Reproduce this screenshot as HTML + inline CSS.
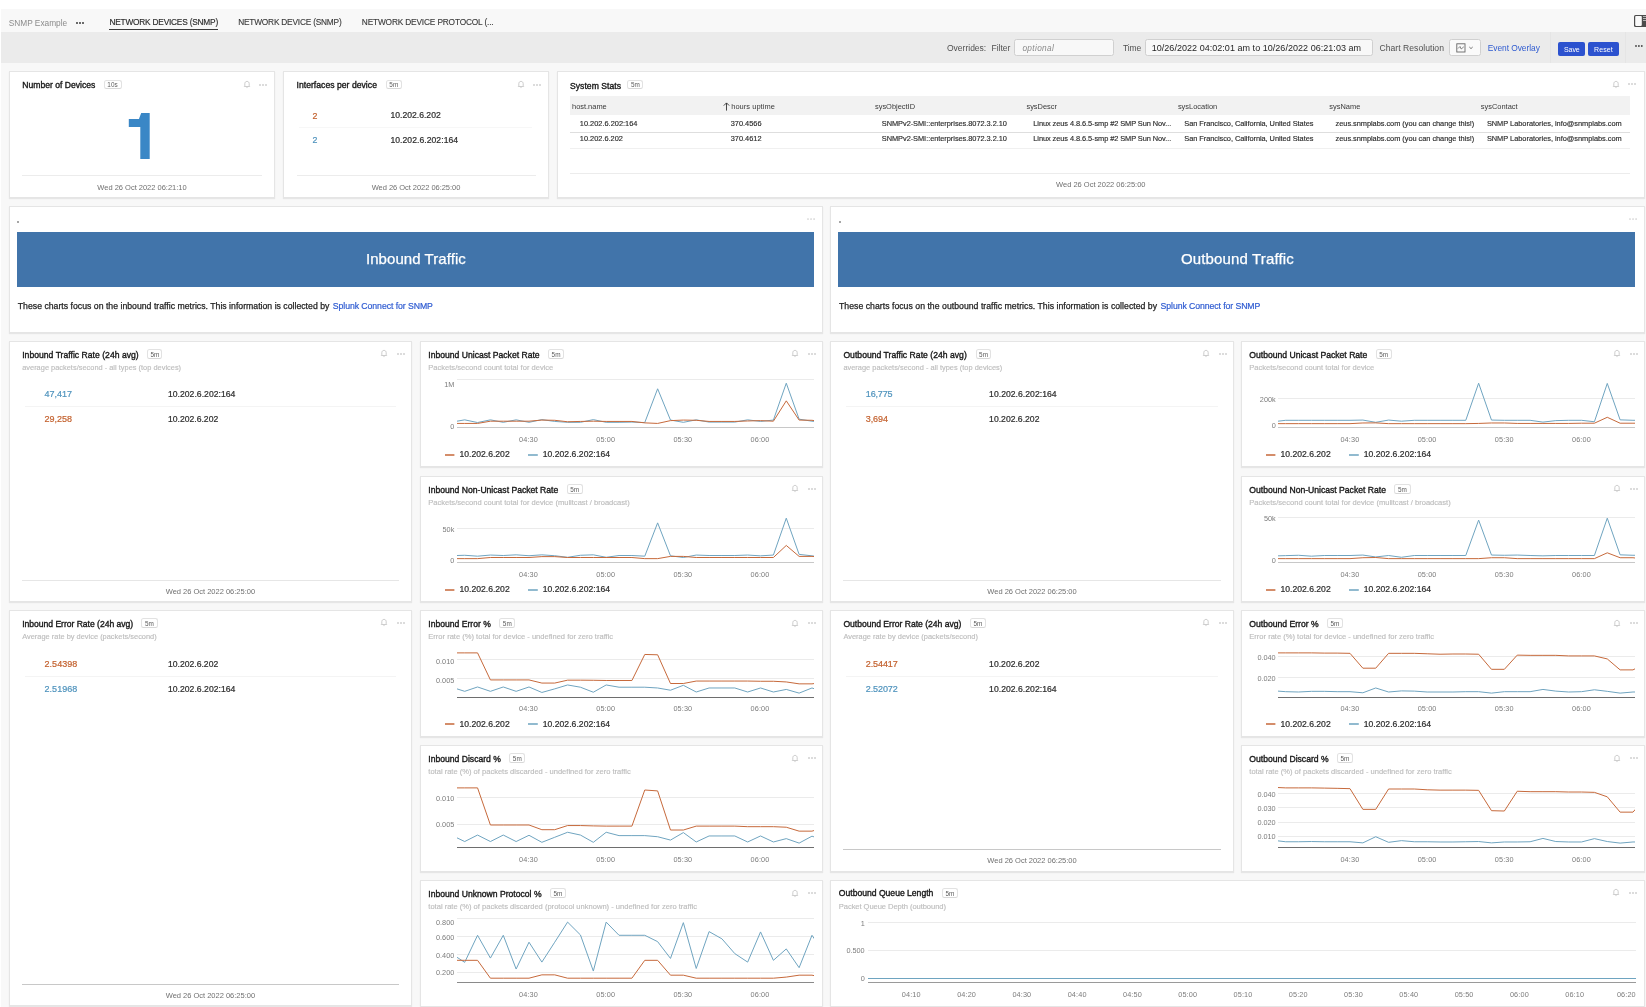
<!DOCTYPE html><html><head><meta charset="utf-8"><title>SNMP Example</title><style>
html,body{margin:0;padding:0;}
body{width:1646px;height:1007px;overflow:hidden;background:#f8f8f8;position:relative;font-family:"Liberation Sans",sans-serif;}
.t{position:absolute;white-space:nowrap;line-height:1;}
#w{position:absolute;left:0;top:0;width:1646px;height:1007px;will-change:transform;}
.r{position:absolute;}
</style></head><body><div id="w"><div class="r" style="left:0;top:0;width:1646px;height:9px;background:#fff"></div>
<div class="r" style="left:0;top:0;width:1px;height:1007px;background:#fff"></div>
<div class="r" style="left:1.00px;top:9.00px;width:1645.00px;height:23.00px;background:#f8f8f8;"></div>
<div class="r" style="left:1.00px;top:32.00px;width:1645.00px;height:30.60px;background:#ebebeb;"></div>
<div class="t" style="left:8.80px;top:19.00px;font-size:8.3px;color:#8b8b8b;letter-spacing:-0.011px;">SNMP Example</div>
<svg class="r" style="left:75.00px;top:20.50px" width="10.00" height="4"><circle cx="2.00" cy="2" r="1.0" fill="#3c3c3c"/><circle cx="5.00" cy="2" r="1.0" fill="#3c3c3c"/><circle cx="8.00" cy="2" r="1.0" fill="#3c3c3c"/></svg>
<div class="t" style="left:109.40px;top:18.00px;font-size:8.3px;color:#2b2b2b;letter-spacing:-0.199px;-webkit-text-stroke:0.15px #2b2b2b;">NETWORK DEVICES (SNMP)</div>
<div class="r" style="left:109.40px;top:28.80px;width:108.60px;height:1.20px;background:#3a3a3a;"></div>
<div class="t" style="left:238.20px;top:18.00px;font-size:8.3px;color:#3a3a3a;letter-spacing:-0.197px;-webkit-text-stroke:0.12px #3a3a3a;">NETWORK DEVICE (SNMP)</div>
<div class="t" style="left:361.80px;top:18.00px;font-size:8.3px;color:#3a3a3a;letter-spacing:-0.155px;-webkit-text-stroke:0.12px #3a3a3a;">NETWORK DEVICE PROTOCOL (...</div>
<svg class="r" style="left:1634px;top:15px" width="12" height="12" viewBox="0 0 12 12"><rect x="0" y="0" width="14" height="12" rx="1.6" fill="#4c4c4c"/><rect x="1.2" y="1.1" width="6.6" height="9.8" rx="0.8" fill="#fafafa"/><rect x="9" y="1.0" width="4" height="0.9" fill="#c0c0c0"/><rect x="9" y="3.0" width="4" height="0.9" fill="#c0c0c0"/><rect x="9" y="5.1" width="4" height="0.9" fill="#c0c0c0"/></svg>
<div class="t" style="left:947.00px;top:44.00px;font-size:8.5px;color:#505050;letter-spacing:-0.000px;">Overrides:</div>
<div class="t" style="left:991.60px;top:44.00px;font-size:8.5px;color:#505050;letter-spacing:-0.048px;">Filter</div>
<div class="r" style="left:1014.10px;top:38.60px;width:99.90px;height:17.90px;background:#f8f8f8;border:1px solid #d0d0d0;border-radius:2.5px;box-sizing:border-box;"></div>
<div class="t" style="left:1022.40px;top:44.00px;font-size:8.3px;color:#8a8a8a;letter-spacing:0.341px;font-style:italic;">optional</div>
<div class="t" style="left:1123.00px;top:44.00px;font-size:8.5px;color:#505050;letter-spacing:-0.143px;">Time</div>
<div class="r" style="left:1144.90px;top:38.60px;width:227.70px;height:17.90px;background:#f8f8f8;border:1px solid #d0d0d0;border-radius:2.5px;box-sizing:border-box;"></div>
<div class="t" style="left:1151.70px;top:44.00px;font-size:9.0px;color:#1f1f1f;letter-spacing:0.036px;">10/26/2022 04:02:01 am to 10/26/2022 06:21:03 am</div>
<div class="t" style="left:1379.50px;top:44.00px;font-size:8.6px;color:#505050;letter-spacing:0.028px;">Chart Resolution</div>
<div class="r" style="left:1448.80px;top:39.10px;width:32.00px;height:16.80px;background:#fafafa;border:1px solid #d0d0d0;border-radius:2.5px;box-sizing:border-box;"></div>
<svg class="r" style="left:1455.5px;top:42.5px" width="20" height="10" viewBox="0 0 20 10"><rect x="0.8" y="0.8" width="8.2" height="8.2" fill="none" stroke="#666" stroke-width="0.9"/><path d="M2 5.5 L4 3.5 L5.2 6 L7.8 3.8" fill="none" stroke="#666" stroke-width="0.8"/><path d="M13.3 4 L15 5.6 L16.7 4" fill="none" stroke="#666" stroke-width="0.9"/></svg>
<div class="t" style="left:1487.70px;top:44.00px;font-size:8.4px;color:#2f5bd0;letter-spacing:-0.035px;">Event Overlay</div>
<div class="r" style="left:1550.00px;top:32.00px;width:0.80px;height:30.60px;background:#e5e5e5;"></div>
<div class="r" style="left:1558.10px;top:42.00px;width:27.40px;height:14.30px;background:#2c52cf;border-radius:2px;"></div>
<div class="t" style="left:1564.05px;top:46.00px;font-size:7.0px;color:#fff;letter-spacing:-0.114px;">Save</div>
<div class="r" style="left:1588.00px;top:42.00px;width:30.90px;height:14.30px;background:#2c52cf;border-radius:2px;"></div>
<div class="t" style="left:1593.95px;top:46.00px;font-size:7.0px;color:#fff;letter-spacing:0.143px;">Reset</div>
<div class="r" style="left:1625.40px;top:32.00px;width:0.80px;height:30.60px;background:#e5e5e5;"></div>
<svg class="r" style="left:1634.30px;top:44.00px" width="9.80" height="4"><circle cx="2.00" cy="2" r="0.9" fill="#444"/><circle cx="4.90" cy="2" r="0.9" fill="#444"/><circle cx="7.80" cy="2" r="0.9" fill="#444"/></svg>
<div class="r" style="left:9.00px;top:71.20px;width:266.00px;height:126.40px;background:#fff;border:1px solid #e5e5e5;box-sizing:border-box;box-shadow:0 1px 1px rgba(0,0,0,0.07);"></div>
<div class="t" style="left:22.30px;top:81.00px;font-size:8.6px;color:#171717;letter-spacing:-0.007px;-webkit-text-stroke:0.35px #171717;">Number of Devices</div>
<div class="r" style="left:103.50px;top:79.80px;width:18.00px;height:9.40px;border:1px solid #e2e2e2;border-bottom-color:#d8d8d8;border-radius:2.5px;box-sizing:border-box;background:#fff;"></div>
<div class="t" style="left:107.34px;top:82.00px;font-size:6.4px;color:#5c5c5c;">10s</div>
<svg class="r" style="left:242.70px;top:79.90px" width="8" height="9" viewBox="0 0 8 9"><path d="M1.3 6.5 L1.8 5.9 L1.8 3.7 C1.8 2.3 2.7 1.4 4 1.4 C5.3 1.4 6.2 2.3 6.2 3.7 L6.2 5.9 L6.7 6.5 Z" fill="none" stroke="#c4c4c4" stroke-width="0.85" stroke-linejoin="round"/><path d="M3.3 7.6 L4.7 7.6" stroke="#c4c4c4" stroke-width="0.7"/></svg>
<svg class="r" style="left:258.40px;top:82.60px" width="10.00" height="4"><circle cx="2.00" cy="2" r="0.8" fill="#b0b0b0"/><circle cx="5.00" cy="2" r="0.8" fill="#b0b0b0"/><circle cx="8.00" cy="2" r="0.8" fill="#b0b0b0"/></svg>
<svg class="r" style="left:0;top:0" width="200" height="200"><path d="M141.2,113 L149.7,113 L149.7,158.9 L140.3,158.9 L140.3,126.9 L128.8,126.9 L128.8,119 L139.1,119 L139.1,118.4 Z" fill="#3a87c6"/></svg>
<div class="r" style="left:22.30px;top:175.00px;width:240.00px;height:1.00px;background:#ececec;"></div>
<div class="t" style="left:97.35px;top:184.00px;font-size:7.5px;color:#707070;letter-spacing:-0.009px;">Wed 26 Oct 2022 06:21:10</div>
<div class="r" style="left:283.20px;top:71.20px;width:266.00px;height:126.40px;background:#fff;border:1px solid #e5e5e5;box-sizing:border-box;box-shadow:0 1px 1px rgba(0,0,0,0.07);"></div>
<div class="t" style="left:296.50px;top:81.00px;font-size:8.6px;color:#171717;letter-spacing:0.032px;-webkit-text-stroke:0.35px #171717;">Interfaces per device</div>
<div class="r" style="left:386.00px;top:79.80px;width:15.60px;height:9.40px;border:1px solid #e2e2e2;border-bottom-color:#d8d8d8;border-radius:2.5px;box-sizing:border-box;background:#fff;"></div>
<div class="t" style="left:389.35px;top:82.00px;font-size:6.4px;color:#5c5c5c;">5m</div>
<svg class="r" style="left:516.50px;top:79.90px" width="8" height="9" viewBox="0 0 8 9"><path d="M1.3 6.5 L1.8 5.9 L1.8 3.7 C1.8 2.3 2.7 1.4 4 1.4 C5.3 1.4 6.2 2.3 6.2 3.7 L6.2 5.9 L6.7 6.5 Z" fill="none" stroke="#c4c4c4" stroke-width="0.85" stroke-linejoin="round"/><path d="M3.3 7.6 L4.7 7.6" stroke="#c4c4c4" stroke-width="0.7"/></svg>
<svg class="r" style="left:532.30px;top:82.60px" width="10.00" height="4"><circle cx="2.00" cy="2" r="0.8" fill="#b0b0b0"/><circle cx="5.00" cy="2" r="0.8" fill="#b0b0b0"/><circle cx="8.00" cy="2" r="0.8" fill="#b0b0b0"/></svg>
<div class="t" style="left:312.50px;top:112.00px;font-size:8.8px;color:#c3612e;-webkit-text-stroke:0.2px #c3612e;">2</div>
<div class="t" style="left:390.40px;top:111.00px;font-size:8.6px;color:#2e2e2e;letter-spacing:0.015px;-webkit-text-stroke:0.22px #2e2e2e;">10.202.6.202</div>
<div class="r" style="left:299.40px;top:127.00px;width:233.00px;height:1.00px;background:#f7f7f7;"></div>
<div class="t" style="left:312.50px;top:136.00px;font-size:8.8px;color:#4f93bd;-webkit-text-stroke:0.2px #4f93bd;">2</div>
<div class="t" style="left:390.40px;top:136.00px;font-size:8.6px;color:#2e2e2e;letter-spacing:0.053px;-webkit-text-stroke:0.22px #2e2e2e;">10.202.6.202:164</div>
<div class="r" style="left:296.50px;top:175.00px;width:239.10px;height:1.00px;background:#ececec;"></div>
<div class="t" style="left:371.70px;top:184.00px;font-size:7.5px;color:#707070;letter-spacing:-0.038px;">Wed 26 Oct 2022 06:25:00</div>
<div class="r" style="left:557.20px;top:71.20px;width:1088.00px;height:126.40px;background:#fff;border:1px solid #e5e5e5;box-sizing:border-box;box-shadow:0 1px 1px rgba(0,0,0,0.07);"></div>
<div class="t" style="left:570.00px;top:82.00px;font-size:8.6px;color:#171717;letter-spacing:0.037px;-webkit-text-stroke:0.35px #171717;">System Stats</div>
<div class="r" style="left:627.40px;top:79.80px;width:15.90px;height:9.40px;border:1px solid #e2e2e2;border-bottom-color:#d8d8d8;border-radius:2.5px;box-sizing:border-box;background:#fff;"></div>
<div class="t" style="left:630.90px;top:82.00px;font-size:6.4px;color:#5c5c5c;">5m</div>
<svg class="r" style="left:1611.80px;top:79.70px" width="8" height="9" viewBox="0 0 8 9"><path d="M1.3 6.5 L1.8 5.9 L1.8 3.7 C1.8 2.3 2.7 1.4 4 1.4 C5.3 1.4 6.2 2.3 6.2 3.7 L6.2 5.9 L6.7 6.5 Z" fill="none" stroke="#c4c4c4" stroke-width="0.85" stroke-linejoin="round"/><path d="M3.3 7.6 L4.7 7.6" stroke="#c4c4c4" stroke-width="0.7"/></svg>
<svg class="r" style="left:1627.20px;top:82.40px" width="10.00" height="4"><circle cx="2.00" cy="2" r="0.8" fill="#b0b0b0"/><circle cx="5.00" cy="2" r="0.8" fill="#b0b0b0"/><circle cx="8.00" cy="2" r="0.8" fill="#b0b0b0"/></svg>
<div class="r" style="left:570.00px;top:96.20px;width:1060.30px;height:18.40px;background:#f2f2f2;"></div>
<div class="t" style="left:572.00px;top:103.00px;font-size:7.45px;color:#3a3a3a;">host.name</div>
<svg class="r" style="left:722.67px;top:101.5px" width="7" height="9" viewBox="0 0 7 9"><path d="M3.5 8.6 L3.5 1 M0.8 3.6 L3.5 0.9 L6.2 3.6" fill="none" stroke="#333" stroke-width="0.9"/></svg>
<div class="t" style="left:731.20px;top:103.00px;font-size:7.45px;color:#3a3a3a;letter-spacing:0.061px;">hours uptime</div>
<div class="t" style="left:874.94px;top:103.00px;font-size:7.45px;color:#3a3a3a;">sysObjectID</div>
<div class="t" style="left:1026.41px;top:103.00px;font-size:7.45px;color:#3a3a3a;">sysDescr</div>
<div class="t" style="left:1177.88px;top:103.00px;font-size:7.45px;color:#3a3a3a;">sysLocation</div>
<div class="t" style="left:1329.35px;top:103.00px;font-size:7.45px;color:#3a3a3a;">sysName</div>
<div class="t" style="left:1480.82px;top:103.00px;font-size:7.45px;color:#3a3a3a;">sysContact</div>
<div class="t" style="left:579.80px;top:120.00px;font-size:7.4px;color:#2a2a2a;letter-spacing:0.006px;-webkit-text-stroke:0.15px #2a2a2a;">10.202.6.202:164</div>
<div class="t" style="left:730.70px;top:120.00px;font-size:7.4px;color:#2a2a2a;-webkit-text-stroke:0.15px #2a2a2a;">370.4566</div>
<div class="t" style="left:881.80px;top:120.00px;font-size:7.4px;color:#2a2a2a;letter-spacing:-0.042px;-webkit-text-stroke:0.15px #2a2a2a;">SNMPv2-SMI::enterprises.8072.3.2.10</div>
<div class="t" style="left:1033.30px;top:120.00px;font-size:7.4px;color:#2a2a2a;letter-spacing:-0.070px;-webkit-text-stroke:0.15px #2a2a2a;">Linux zeus 4.8.6.5-smp #2 SMP Sun Nov...</div>
<div class="t" style="left:1184.30px;top:120.00px;font-size:7.4px;color:#2a2a2a;letter-spacing:-0.050px;-webkit-text-stroke:0.15px #2a2a2a;">San Francisco, California, United States</div>
<div class="t" style="left:1335.60px;top:120.00px;font-size:7.4px;color:#2a2a2a;letter-spacing:-0.036px;-webkit-text-stroke:0.15px #2a2a2a;">zeus.snmplabs.com (you can change this!)</div>
<div class="t" style="left:1486.90px;top:120.00px;font-size:7.4px;color:#2a2a2a;letter-spacing:-0.019px;-webkit-text-stroke:0.15px #2a2a2a;">SNMP Laboratories, info@snmplabs.com</div>
<div class="t" style="left:579.80px;top:135.00px;font-size:7.4px;color:#2a2a2a;-webkit-text-stroke:0.15px #2a2a2a;">10.202.6.202</div>
<div class="t" style="left:730.70px;top:135.00px;font-size:7.4px;color:#2a2a2a;-webkit-text-stroke:0.15px #2a2a2a;">370.4612</div>
<div class="t" style="left:881.80px;top:135.00px;font-size:7.4px;color:#2a2a2a;letter-spacing:-0.042px;-webkit-text-stroke:0.15px #2a2a2a;">SNMPv2-SMI::enterprises.8072.3.2.10</div>
<div class="t" style="left:1033.30px;top:135.00px;font-size:7.4px;color:#2a2a2a;letter-spacing:-0.070px;-webkit-text-stroke:0.15px #2a2a2a;">Linux zeus 4.8.6.5-smp #2 SMP Sun Nov...</div>
<div class="t" style="left:1184.30px;top:135.00px;font-size:7.4px;color:#2a2a2a;letter-spacing:-0.050px;-webkit-text-stroke:0.15px #2a2a2a;">San Francisco, California, United States</div>
<div class="t" style="left:1335.60px;top:135.00px;font-size:7.4px;color:#2a2a2a;letter-spacing:-0.036px;-webkit-text-stroke:0.15px #2a2a2a;">zeus.snmplabs.com (you can change this!)</div>
<div class="t" style="left:1486.90px;top:135.00px;font-size:7.4px;color:#2a2a2a;letter-spacing:-0.019px;-webkit-text-stroke:0.15px #2a2a2a;">SNMP Laboratories, info@snmplabs.com</div>
<div class="r" style="left:570.00px;top:132.00px;width:1060.30px;height:0.80px;background:#dedede;"></div>
<div class="r" style="left:570.00px;top:148.20px;width:1060.30px;height:0.70px;background:#f0f0f0;"></div>
<div class="r" style="left:570.00px;top:173.10px;width:1060.30px;height:0.80px;background:#ececec;"></div>
<div class="t" style="left:1056.10px;top:181.00px;font-size:7.5px;color:#707070;letter-spacing:-0.005px;">Wed 26 Oct 2022 06:25:00</div>
<div class="r" style="left:9.00px;top:206.20px;width:813.80px;height:126.40px;background:#fff;border:1px solid #e5e5e5;box-sizing:border-box;box-shadow:0 1px 1px rgba(0,0,0,0.07);"></div>
<svg class="r" style="left:16.40px;top:219.80px" width="4" height="4"><circle cx="2" cy="2" r="0.75" fill="#222"/></svg>
<svg class="r" style="left:805.95px;top:217.00px" width="10.10" height="4"><circle cx="2.00" cy="2" r="0.85" fill="#cfcfcf"/><circle cx="5.05" cy="2" r="0.85" fill="#cfcfcf"/><circle cx="8.10" cy="2" r="0.85" fill="#cfcfcf"/></svg>
<div class="r" style="left:17.00px;top:231.60px;width:797.20px;height:55.80px;background:#4174aa;"></div>
<div class="t" style="left:365.95px;top:251.00px;font-size:15.0px;color:#ffffff;letter-spacing:0.063px;-webkit-text-stroke:0.25px #ffffff;">Inbound Traffic</div>
<div class="t" style="left:17.80px;top:302.00px;font-size:8.7px;color:#222;letter-spacing:0.011px;-webkit-text-stroke:0.25px #222;">These charts focus on the inbound traffic metrics. This information is collected by </div>
<div class="t" style="left:332.80px;top:302.00px;font-size:8.7px;color:#2e5bd1;letter-spacing:-0.059px;-webkit-text-stroke:0.2px #2e5bd1;">Splunk Connect for SNMP</div>
<div class="r" style="left:830.20px;top:206.20px;width:814.60px;height:126.40px;background:#fff;border:1px solid #e5e5e5;box-sizing:border-box;box-shadow:0 1px 1px rgba(0,0,0,0.07);"></div>
<svg class="r" style="left:837.60px;top:219.80px" width="4" height="4"><circle cx="2" cy="2" r="0.75" fill="#222"/></svg>
<svg class="r" style="left:1627.85px;top:217.00px" width="10.10" height="4"><circle cx="2.00" cy="2" r="0.85" fill="#cfcfcf"/><circle cx="5.05" cy="2" r="0.85" fill="#cfcfcf"/><circle cx="8.10" cy="2" r="0.85" fill="#cfcfcf"/></svg>
<div class="r" style="left:838.20px;top:231.60px;width:797.20px;height:55.80px;background:#4174aa;"></div>
<div class="t" style="left:1181.00px;top:251.00px;font-size:15.0px;color:#ffffff;letter-spacing:0.148px;-webkit-text-stroke:0.25px #ffffff;">Outbound Traffic</div>
<div class="t" style="left:839.00px;top:302.00px;font-size:8.7px;color:#222;letter-spacing:0.025px;-webkit-text-stroke:0.25px #222;">These charts focus on the outbound traffic metrics. This information is collected by </div>
<div class="t" style="left:1160.60px;top:302.00px;font-size:8.7px;color:#2e5bd1;letter-spacing:-0.076px;-webkit-text-stroke:0.2px #2e5bd1;">Splunk Connect for SNMP</div>
<div class="r" style="left:9.00px;top:341.10px;width:403.00px;height:261.25px;background:#fff;border:1px solid #e5e5e5;box-sizing:border-box;box-shadow:0 1px 1px rgba(0,0,0,0.07);"></div>
<div class="t" style="left:22.20px;top:351.00px;font-size:8.6px;color:#171717;letter-spacing:0.020px;-webkit-text-stroke:0.35px #171717;">Inbound Traffic Rate (24h avg)</div>
<div class="r" style="left:147.30px;top:349.10px;width:15.20px;height:10.00px;border:1px solid #e2e2e2;border-bottom-color:#d8d8d8;border-radius:2.5px;box-sizing:border-box;background:#fff;"></div>
<div class="t" style="left:150.45px;top:352.00px;font-size:6.4px;color:#5c5c5c;">5m</div>
<svg class="r" style="left:380.00px;top:349.20px" width="8" height="9" viewBox="0 0 8 9"><path d="M1.3 6.5 L1.8 5.9 L1.8 3.7 C1.8 2.3 2.7 1.4 4 1.4 C5.3 1.4 6.2 2.3 6.2 3.7 L6.2 5.9 L6.7 6.5 Z" fill="none" stroke="#c4c4c4" stroke-width="0.85" stroke-linejoin="round"/><path d="M3.3 7.6 L4.7 7.6" stroke="#c4c4c4" stroke-width="0.7"/></svg>
<svg class="r" style="left:395.80px;top:351.90px" width="10.00" height="4"><circle cx="2.00" cy="2" r="0.8" fill="#b0b0b0"/><circle cx="5.00" cy="2" r="0.8" fill="#b0b0b0"/><circle cx="8.00" cy="2" r="0.8" fill="#b0b0b0"/></svg>
<div class="t" style="left:22.20px;top:364.00px;font-size:7.4px;color:#bdbdbd;letter-spacing:0.015px;-webkit-text-stroke:0.15px #bdbdbd;">average packets/second - all types (top devices)</div>
<div class="t" style="left:44.60px;top:390.00px;font-size:9.0px;color:#4f93bd;letter-spacing:-0.021px;-webkit-text-stroke:0.2px #4f93bd;">47,417</div>
<div class="t" style="left:167.90px;top:390.00px;font-size:8.6px;color:#2e2e2e;letter-spacing:0.040px;-webkit-text-stroke:0.22px #2e2e2e;">10.202.6.202:164</div>
<div class="t" style="left:44.60px;top:415.00px;font-size:9.0px;color:#c3612e;letter-spacing:-0.021px;-webkit-text-stroke:0.2px #c3612e;">29,258</div>
<div class="t" style="left:167.90px;top:415.00px;font-size:8.6px;color:#2e2e2e;letter-spacing:0.015px;-webkit-text-stroke:0.22px #2e2e2e;">10.202.6.202</div>
<div class="r" style="left:25.00px;top:406.20px;width:370.70px;height:1.00px;background:#f4f4f4;"></div>
<div class="r" style="left:21.60px;top:579.95px;width:377.60px;height:1.00px;background:#e6e6e6;"></div>
<div class="t" style="left:165.75px;top:588.00px;font-size:7.5px;color:#707070;letter-spacing:-0.009px;">Wed 26 Oct 2022 06:25:00</div>
<div class="r" style="left:9.00px;top:610.30px;width:403.00px;height:396.10px;background:#fff;border:1px solid #e5e5e5;box-sizing:border-box;box-shadow:0 1px 1px rgba(0,0,0,0.07);"></div>
<div class="t" style="left:22.20px;top:620.00px;font-size:8.6px;color:#171717;letter-spacing:-0.031px;-webkit-text-stroke:0.35px #171717;">Inbound Error Rate (24h avg)</div>
<div class="r" style="left:141.10px;top:618.30px;width:16.60px;height:10.00px;border:1px solid #e2e2e2;border-bottom-color:#d8d8d8;border-radius:2.5px;box-sizing:border-box;background:#fff;"></div>
<div class="t" style="left:144.95px;top:621.00px;font-size:6.4px;color:#5c5c5c;">5m</div>
<svg class="r" style="left:380.00px;top:618.40px" width="8" height="9" viewBox="0 0 8 9"><path d="M1.3 6.5 L1.8 5.9 L1.8 3.7 C1.8 2.3 2.7 1.4 4 1.4 C5.3 1.4 6.2 2.3 6.2 3.7 L6.2 5.9 L6.7 6.5 Z" fill="none" stroke="#c4c4c4" stroke-width="0.85" stroke-linejoin="round"/><path d="M3.3 7.6 L4.7 7.6" stroke="#c4c4c4" stroke-width="0.7"/></svg>
<svg class="r" style="left:395.80px;top:621.10px" width="10.00" height="4"><circle cx="2.00" cy="2" r="0.8" fill="#b0b0b0"/><circle cx="5.00" cy="2" r="0.8" fill="#b0b0b0"/><circle cx="8.00" cy="2" r="0.8" fill="#b0b0b0"/></svg>
<div class="t" style="left:22.20px;top:633.00px;font-size:7.4px;color:#bdbdbd;letter-spacing:0.019px;-webkit-text-stroke:0.15px #bdbdbd;">Average rate by device (packets/second)</div>
<div class="t" style="left:44.60px;top:660.00px;font-size:9.0px;color:#c3612e;letter-spacing:0.010px;-webkit-text-stroke:0.2px #c3612e;">2.54398</div>
<div class="t" style="left:167.90px;top:660.00px;font-size:8.6px;color:#2e2e2e;letter-spacing:0.015px;-webkit-text-stroke:0.22px #2e2e2e;">10.202.6.202</div>
<div class="t" style="left:44.60px;top:685.00px;font-size:9.0px;color:#4f93bd;letter-spacing:0.010px;-webkit-text-stroke:0.2px #4f93bd;">2.51968</div>
<div class="t" style="left:167.90px;top:685.00px;font-size:8.6px;color:#2e2e2e;letter-spacing:0.040px;-webkit-text-stroke:0.22px #2e2e2e;">10.202.6.202:164</div>
<div class="r" style="left:25.00px;top:676.30px;width:370.70px;height:1.00px;background:#f4f4f4;"></div>
<div class="r" style="left:21.60px;top:984.00px;width:377.60px;height:1.00px;background:#c8c8c8;"></div>
<div class="t" style="left:165.75px;top:992.00px;font-size:7.5px;color:#707070;letter-spacing:-0.009px;">Wed 26 Oct 2022 06:25:00</div>
<div class="r" style="left:830.20px;top:341.10px;width:403.80px;height:261.25px;background:#fff;border:1px solid #e5e5e5;box-sizing:border-box;box-shadow:0 1px 1px rgba(0,0,0,0.07);"></div>
<div class="t" style="left:843.40px;top:351.00px;font-size:8.6px;color:#171717;letter-spacing:0.026px;-webkit-text-stroke:0.35px #171717;">Outbound Traffic Rate (24h avg)</div>
<div class="r" style="left:975.70px;top:349.10px;width:15.70px;height:10.00px;border:1px solid #e2e2e2;border-bottom-color:#d8d8d8;border-radius:2.5px;box-sizing:border-box;background:#fff;"></div>
<div class="t" style="left:979.10px;top:352.00px;font-size:6.4px;color:#5c5c5c;">5m</div>
<svg class="r" style="left:1202.00px;top:349.20px" width="8" height="9" viewBox="0 0 8 9"><path d="M1.3 6.5 L1.8 5.9 L1.8 3.7 C1.8 2.3 2.7 1.4 4 1.4 C5.3 1.4 6.2 2.3 6.2 3.7 L6.2 5.9 L6.7 6.5 Z" fill="none" stroke="#c4c4c4" stroke-width="0.85" stroke-linejoin="round"/><path d="M3.3 7.6 L4.7 7.6" stroke="#c4c4c4" stroke-width="0.7"/></svg>
<svg class="r" style="left:1217.80px;top:351.90px" width="10.00" height="4"><circle cx="2.00" cy="2" r="0.8" fill="#b0b0b0"/><circle cx="5.00" cy="2" r="0.8" fill="#b0b0b0"/><circle cx="8.00" cy="2" r="0.8" fill="#b0b0b0"/></svg>
<div class="t" style="left:843.40px;top:364.00px;font-size:7.4px;color:#bdbdbd;letter-spacing:0.015px;-webkit-text-stroke:0.15px #bdbdbd;">average packets/second - all types (top devices)</div>
<div class="t" style="left:865.80px;top:390.00px;font-size:9.0px;color:#4f93bd;letter-spacing:-0.155px;-webkit-text-stroke:0.2px #4f93bd;">16,775</div>
<div class="t" style="left:989.10px;top:390.00px;font-size:8.6px;color:#2e2e2e;letter-spacing:0.040px;-webkit-text-stroke:0.22px #2e2e2e;">10.202.6.202:164</div>
<div class="t" style="left:865.80px;top:415.00px;font-size:9.0px;color:#c3612e;letter-spacing:-0.104px;-webkit-text-stroke:0.2px #c3612e;">3,694</div>
<div class="t" style="left:989.10px;top:415.00px;font-size:8.6px;color:#2e2e2e;letter-spacing:0.015px;-webkit-text-stroke:0.22px #2e2e2e;">10.202.6.202</div>
<div class="r" style="left:846.20px;top:406.20px;width:371.50px;height:1.00px;background:#f4f4f4;"></div>
<div class="r" style="left:842.80px;top:579.95px;width:378.40px;height:1.00px;background:#e6e6e6;"></div>
<div class="t" style="left:987.35px;top:588.00px;font-size:7.5px;color:#707070;letter-spacing:-0.009px;">Wed 26 Oct 2022 06:25:00</div>
<div class="r" style="left:830.20px;top:610.30px;width:403.80px;height:261.25px;background:#fff;border:1px solid #e5e5e5;box-sizing:border-box;box-shadow:0 1px 1px rgba(0,0,0,0.07);"></div>
<div class="t" style="left:843.40px;top:620.00px;font-size:8.6px;color:#171717;letter-spacing:-0.019px;-webkit-text-stroke:0.35px #171717;">Outbound Error Rate (24h avg)</div>
<div class="r" style="left:969.50px;top:618.30px;width:16.70px;height:10.00px;border:1px solid #e2e2e2;border-bottom-color:#d8d8d8;border-radius:2.5px;box-sizing:border-box;background:#fff;"></div>
<div class="t" style="left:973.40px;top:621.00px;font-size:6.4px;color:#5c5c5c;">5m</div>
<svg class="r" style="left:1202.00px;top:618.40px" width="8" height="9" viewBox="0 0 8 9"><path d="M1.3 6.5 L1.8 5.9 L1.8 3.7 C1.8 2.3 2.7 1.4 4 1.4 C5.3 1.4 6.2 2.3 6.2 3.7 L6.2 5.9 L6.7 6.5 Z" fill="none" stroke="#c4c4c4" stroke-width="0.85" stroke-linejoin="round"/><path d="M3.3 7.6 L4.7 7.6" stroke="#c4c4c4" stroke-width="0.7"/></svg>
<svg class="r" style="left:1217.80px;top:621.10px" width="10.00" height="4"><circle cx="2.00" cy="2" r="0.8" fill="#b0b0b0"/><circle cx="5.00" cy="2" r="0.8" fill="#b0b0b0"/><circle cx="8.00" cy="2" r="0.8" fill="#b0b0b0"/></svg>
<div class="t" style="left:843.40px;top:633.00px;font-size:7.4px;color:#bdbdbd;letter-spacing:0.019px;-webkit-text-stroke:0.15px #bdbdbd;">Average rate by device (packets/second)</div>
<div class="t" style="left:865.80px;top:660.00px;font-size:9.0px;color:#c3612e;letter-spacing:-0.090px;-webkit-text-stroke:0.2px #c3612e;">2.54417</div>
<div class="t" style="left:989.10px;top:660.00px;font-size:8.6px;color:#2e2e2e;letter-spacing:0.015px;-webkit-text-stroke:0.22px #2e2e2e;">10.202.6.202</div>
<div class="t" style="left:865.80px;top:685.00px;font-size:9.0px;color:#4f93bd;letter-spacing:-0.090px;-webkit-text-stroke:0.2px #4f93bd;">2.52072</div>
<div class="t" style="left:989.10px;top:685.00px;font-size:8.6px;color:#2e2e2e;letter-spacing:0.040px;-webkit-text-stroke:0.22px #2e2e2e;">10.202.6.202:164</div>
<div class="r" style="left:846.20px;top:676.30px;width:371.50px;height:1.00px;background:#f4f4f4;"></div>
<div class="r" style="left:842.80px;top:849.15px;width:378.40px;height:1.00px;background:#c8c8c8;"></div>
<div class="t" style="left:987.35px;top:857.00px;font-size:7.5px;color:#707070;letter-spacing:-0.009px;">Wed 26 Oct 2022 06:25:00</div>
<div class="r" style="left:420.00px;top:341.10px;width:402.80px;height:126.40px;background:#fff;border:1px solid #e5e5e5;box-sizing:border-box;box-shadow:0 1px 1px rgba(0,0,0,0.07);"></div>
<div class="t" style="left:428.30px;top:351.00px;font-size:8.6px;color:#171717;-webkit-text-stroke:0.35px #171717;">Inbound Unicast Packet Rate</div>
<div class="r" style="left:547.89px;top:349.10px;width:16.30px;height:10.10px;border:1px solid #e2e2e2;border-bottom-color:#d8d8d8;border-radius:2.5px;box-sizing:border-box;background:#fff;"></div>
<div class="t" style="left:551.59px;top:352.00px;font-size:6.4px;color:#5c5c5c;">5m</div>
<svg class="r" style="left:791.30px;top:349.40px" width="8" height="9" viewBox="0 0 8 9"><path d="M1.3 6.5 L1.8 5.9 L1.8 3.7 C1.8 2.3 2.7 1.4 4 1.4 C5.3 1.4 6.2 2.3 6.2 3.7 L6.2 5.9 L6.7 6.5 Z" fill="none" stroke="#c4c4c4" stroke-width="0.85" stroke-linejoin="round"/><path d="M3.3 7.6 L4.7 7.6" stroke="#c4c4c4" stroke-width="0.7"/></svg>
<svg class="r" style="left:807.20px;top:352.10px" width="10.00" height="4"><circle cx="2.00" cy="2" r="0.8" fill="#b0b0b0"/><circle cx="5.00" cy="2" r="0.8" fill="#b0b0b0"/><circle cx="8.00" cy="2" r="0.8" fill="#b0b0b0"/></svg>
<div class="t" style="left:428.30px;top:364.00px;font-size:7.56px;color:#bdbdbd;-webkit-text-stroke:0.15px #bdbdbd;">Packets/second count total for device</div>
<div class="r" style="left:456.50px;top:378.55px;width:357.60px;height:1.00px;background:#ebebeb;"></div>
<div class="r" style="left:456.50px;top:426.60px;width:357.60px;height:1.60px;background:#c8c8c8;"></div>
<div class="t" style="left:444.16px;top:381.00px;font-size:7.3px;color:#7c7c7c;">1M</div>
<div class="t" style="left:450.24px;top:423.00px;font-size:7.3px;color:#7c7c7c;">0</div>
<div class="t" style="left:519.04px;top:436.00px;font-size:7.3px;color:#7c7c7c;letter-spacing:0.126px;">04:30</div>
<div class="t" style="left:596.23px;top:436.00px;font-size:7.3px;color:#7c7c7c;letter-spacing:0.126px;">05:00</div>
<div class="t" style="left:673.41px;top:436.00px;font-size:7.3px;color:#7c7c7c;letter-spacing:0.126px;">05:30</div>
<div class="t" style="left:750.60px;top:436.00px;font-size:7.3px;color:#7c7c7c;letter-spacing:0.126px;">06:00</div>
<svg class="r" style="left:456.50px;top:341.10px;overflow:hidden" width="357.60" height="126.40" viewBox="456.50 341.10 357.60 126.40"><polyline points="456.50,421.30 464.18,419.96 477.04,422.64 489.90,419.96 502.77,422.42 515.63,419.96 528.50,422.42 541.36,419.74 554.22,421.53 567.09,422.42 579.95,422.42 592.82,419.74 605.68,422.42 618.54,422.42 631.41,422.20 644.27,422.64 657.14,388.89 670.00,420.18 682.86,422.42 695.73,419.96 708.59,422.20 721.46,422.20 734.32,422.20 747.18,419.96 760.05,421.53 772.91,420.18 785.78,383.30 798.64,419.29 811.50,421.30 814.10,421.53" fill="none" stroke="#6ea4c0" stroke-width="1.0" stroke-linejoin="round"/><polyline points="456.50,423.54 464.18,423.54 477.04,423.54 489.90,421.30 502.77,421.30 515.63,421.30 528.50,421.30 541.36,420.18 554.22,420.41 567.09,421.86 579.95,421.53 592.82,421.30 605.68,421.53 618.54,421.53 631.41,421.53 644.27,422.98 657.14,423.54 670.00,420.74 682.86,420.18 695.73,420.41 708.59,421.53 721.46,421.53 734.32,421.53 747.18,421.08 760.05,420.74 772.91,421.30 785.78,400.96 798.64,420.18 811.50,420.41 814.10,420.74" fill="none" stroke="#c6683a" stroke-width="1.0" stroke-linejoin="round"/></svg>
<svg class="r" style="left:444.90px;top:452.80px" width="10" height="4"><rect x="0" y="1.25" width="9.4" height="1.5" fill="#c6683a"/></svg>
<div class="t" style="left:459.50px;top:450.00px;font-size:8.6px;color:#2e2e2e;letter-spacing:-0.001px;-webkit-text-stroke:0.22px #2e2e2e;">10.202.6.202</div>
<svg class="r" style="left:528.10px;top:452.80px" width="10" height="4"><rect x="0" y="1.25" width="9.8" height="1.5" fill="#6ea4c0"/></svg>
<div class="t" style="left:542.70px;top:450.00px;font-size:8.6px;color:#2e2e2e;letter-spacing:0.034px;-webkit-text-stroke:0.22px #2e2e2e;">10.202.6.202:164</div>
<div class="r" style="left:420.00px;top:475.90px;width:402.80px;height:126.40px;background:#fff;border:1px solid #e5e5e5;box-sizing:border-box;box-shadow:0 1px 1px rgba(0,0,0,0.07);"></div>
<div class="t" style="left:428.30px;top:486.00px;font-size:8.6px;color:#171717;-webkit-text-stroke:0.35px #171717;">Inbound Non-Unicast Packet Rate</div>
<div class="r" style="left:566.53px;top:483.90px;width:16.30px;height:10.10px;border:1px solid #e2e2e2;border-bottom-color:#d8d8d8;border-radius:2.5px;box-sizing:border-box;background:#fff;"></div>
<div class="t" style="left:570.23px;top:487.00px;font-size:6.4px;color:#5c5c5c;">5m</div>
<svg class="r" style="left:791.30px;top:484.20px" width="8" height="9" viewBox="0 0 8 9"><path d="M1.3 6.5 L1.8 5.9 L1.8 3.7 C1.8 2.3 2.7 1.4 4 1.4 C5.3 1.4 6.2 2.3 6.2 3.7 L6.2 5.9 L6.7 6.5 Z" fill="none" stroke="#c4c4c4" stroke-width="0.85" stroke-linejoin="round"/><path d="M3.3 7.6 L4.7 7.6" stroke="#c4c4c4" stroke-width="0.7"/></svg>
<svg class="r" style="left:807.20px;top:486.90px" width="10.00" height="4"><circle cx="2.00" cy="2" r="0.8" fill="#b0b0b0"/><circle cx="5.00" cy="2" r="0.8" fill="#b0b0b0"/><circle cx="8.00" cy="2" r="0.8" fill="#b0b0b0"/></svg>
<div class="t" style="left:428.30px;top:499.00px;font-size:7.56px;color:#bdbdbd;-webkit-text-stroke:0.15px #bdbdbd;">Packets/second count total for device (mulitcast / broadcast)</div>
<div class="r" style="left:456.50px;top:528.20px;width:357.60px;height:1.00px;background:#ebebeb;"></div>
<div class="r" style="left:456.50px;top:561.65px;width:357.60px;height:1.60px;background:#c8c8c8;"></div>
<div class="t" style="left:442.53px;top:526.00px;font-size:7.3px;color:#7c7c7c;">50k</div>
<div class="t" style="left:450.24px;top:557.00px;font-size:7.3px;color:#7c7c7c;">0</div>
<div class="t" style="left:519.04px;top:571.00px;font-size:7.3px;color:#7c7c7c;letter-spacing:0.126px;">04:30</div>
<div class="t" style="left:596.23px;top:571.00px;font-size:7.3px;color:#7c7c7c;letter-spacing:0.126px;">05:00</div>
<div class="t" style="left:673.41px;top:571.00px;font-size:7.3px;color:#7c7c7c;letter-spacing:0.126px;">05:30</div>
<div class="t" style="left:750.60px;top:571.00px;font-size:7.3px;color:#7c7c7c;letter-spacing:0.126px;">06:00</div>
<svg class="r" style="left:456.50px;top:475.90px;overflow:hidden" width="357.60" height="126.40" viewBox="456.50 475.90 357.60 126.40"><polyline points="456.50,555.41 464.18,555.18 477.04,556.08 489.90,554.96 502.77,555.41 515.63,554.74 528.50,555.63 541.36,554.74 554.22,555.63 567.09,557.20 579.95,555.18 592.82,554.74 605.68,557.20 618.54,555.41 631.41,555.41 644.27,556.08 657.14,522.77 670.00,555.74 682.86,557.42 695.73,554.96 708.59,555.41 721.46,555.41 734.32,555.41 747.18,554.96 760.05,555.74 772.91,554.96 785.78,518.07 798.64,554.29 811.50,555.74 814.10,556.08" fill="none" stroke="#6ea4c0" stroke-width="1.0" stroke-linejoin="round"/><polyline points="456.50,558.54 464.18,558.54 477.04,558.54 489.90,557.42 502.77,557.42 515.63,557.42 528.50,557.42 541.36,556.53 554.22,556.53 567.09,557.42 579.95,557.42 592.82,557.42 605.68,557.42 618.54,557.42 631.41,557.42 644.27,558.54 657.14,558.54 670.00,556.30 682.86,556.30 695.73,557.42 708.59,557.42 721.46,557.42 734.32,557.42 747.18,557.42 760.05,557.42 772.91,557.42 785.78,545.35 798.64,556.30 811.50,556.30 814.10,556.53" fill="none" stroke="#c6683a" stroke-width="1.0" stroke-linejoin="round"/></svg>
<svg class="r" style="left:444.90px;top:587.60px" width="10" height="4"><rect x="0" y="1.25" width="9.4" height="1.5" fill="#c6683a"/></svg>
<div class="t" style="left:459.50px;top:585.00px;font-size:8.6px;color:#2e2e2e;letter-spacing:-0.001px;-webkit-text-stroke:0.22px #2e2e2e;">10.202.6.202</div>
<svg class="r" style="left:528.10px;top:587.60px" width="10" height="4"><rect x="0" y="1.25" width="9.8" height="1.5" fill="#6ea4c0"/></svg>
<div class="t" style="left:542.70px;top:585.00px;font-size:8.6px;color:#2e2e2e;letter-spacing:0.034px;-webkit-text-stroke:0.22px #2e2e2e;">10.202.6.202:164</div>
<div class="r" style="left:420.00px;top:610.30px;width:402.80px;height:126.40px;background:#fff;border:1px solid #e5e5e5;box-sizing:border-box;box-shadow:0 1px 1px rgba(0,0,0,0.07);"></div>
<div class="t" style="left:428.30px;top:620.00px;font-size:8.6px;color:#171717;-webkit-text-stroke:0.35px #171717;">Inbound Error %</div>
<div class="r" style="left:499.12px;top:618.30px;width:16.30px;height:10.10px;border:1px solid #e2e2e2;border-bottom-color:#d8d8d8;border-radius:2.5px;box-sizing:border-box;background:#fff;"></div>
<div class="t" style="left:502.83px;top:621.00px;font-size:6.4px;color:#5c5c5c;">5m</div>
<svg class="r" style="left:791.30px;top:618.60px" width="8" height="9" viewBox="0 0 8 9"><path d="M1.3 6.5 L1.8 5.9 L1.8 3.7 C1.8 2.3 2.7 1.4 4 1.4 C5.3 1.4 6.2 2.3 6.2 3.7 L6.2 5.9 L6.7 6.5 Z" fill="none" stroke="#c4c4c4" stroke-width="0.85" stroke-linejoin="round"/><path d="M3.3 7.6 L4.7 7.6" stroke="#c4c4c4" stroke-width="0.7"/></svg>
<svg class="r" style="left:807.20px;top:621.30px" width="10.00" height="4"><circle cx="2.00" cy="2" r="0.8" fill="#b0b0b0"/><circle cx="5.00" cy="2" r="0.8" fill="#b0b0b0"/><circle cx="8.00" cy="2" r="0.8" fill="#b0b0b0"/></svg>
<div class="t" style="left:428.30px;top:633.00px;font-size:7.56px;color:#bdbdbd;-webkit-text-stroke:0.15px #bdbdbd;">Error rate (%) total for device - undefined for zero traffic</div>
<div class="r" style="left:456.50px;top:659.40px;width:357.60px;height:1.00px;background:#ebebeb;"></div>
<div class="r" style="left:456.50px;top:678.10px;width:357.60px;height:1.00px;background:#ebebeb;"></div>
<div class="r" style="left:456.50px;top:697.05px;width:357.60px;height:1.10px;background:#6e6e6e;"></div>
<div class="t" style="left:436.03px;top:658.00px;font-size:7.3px;color:#7c7c7c;">0.010</div>
<div class="t" style="left:436.03px;top:677.00px;font-size:7.3px;color:#7c7c7c;">0.005</div>
<div class="t" style="left:519.04px;top:705.00px;font-size:7.3px;color:#7c7c7c;letter-spacing:0.126px;">04:30</div>
<div class="t" style="left:596.23px;top:705.00px;font-size:7.3px;color:#7c7c7c;letter-spacing:0.126px;">05:00</div>
<div class="t" style="left:673.41px;top:705.00px;font-size:7.3px;color:#7c7c7c;letter-spacing:0.126px;">05:30</div>
<div class="t" style="left:750.60px;top:705.00px;font-size:7.3px;color:#7c7c7c;letter-spacing:0.126px;">06:00</div>
<svg class="r" style="left:456.50px;top:610.30px;overflow:hidden" width="357.60" height="126.40" viewBox="456.50 610.30 357.60 126.40"><polyline points="456.50,689.18 464.18,691.64 477.04,687.28 489.90,691.64 502.77,687.28 515.63,691.64 528.50,687.28 541.36,692.76 554.22,689.18 567.09,685.27 579.95,687.51 592.82,692.54 605.68,685.27 618.54,687.51 631.41,687.51 644.27,687.51 657.14,688.29 670.00,690.53 682.86,685.61 695.73,692.31 708.59,688.29 721.46,688.29 734.32,688.29 747.18,692.31 760.05,688.29 772.91,692.31 785.78,689.74 798.64,693.43 811.50,688.29 814.10,689.18" fill="none" stroke="#6ea4c0" stroke-width="1.0" stroke-linejoin="round"/><polyline points="456.50,653.19 464.18,653.19 477.04,653.19 489.90,680.24 502.77,680.24 515.63,680.24 528.50,680.24 541.36,683.37 554.22,683.37 567.09,680.47 579.95,680.47 592.82,680.58 605.68,680.80 618.54,680.80 631.41,680.80 644.27,654.76 657.14,655.09 670.00,683.82 682.86,683.82 695.73,681.36 708.59,681.36 721.46,681.36 734.32,681.36 747.18,681.36 760.05,681.58 772.91,681.58 785.78,682.25 798.64,684.15 811.50,684.15 814.10,683.82" fill="none" stroke="#c6683a" stroke-width="1.0" stroke-linejoin="round"/></svg>
<svg class="r" style="left:444.90px;top:722.00px" width="10" height="4"><rect x="0" y="1.25" width="9.4" height="1.5" fill="#c6683a"/></svg>
<div class="t" style="left:459.50px;top:720.00px;font-size:8.6px;color:#2e2e2e;letter-spacing:-0.001px;-webkit-text-stroke:0.22px #2e2e2e;">10.202.6.202</div>
<svg class="r" style="left:528.10px;top:722.00px" width="10" height="4"><rect x="0" y="1.25" width="9.8" height="1.5" fill="#6ea4c0"/></svg>
<div class="t" style="left:542.70px;top:720.00px;font-size:8.6px;color:#2e2e2e;letter-spacing:0.034px;-webkit-text-stroke:0.22px #2e2e2e;">10.202.6.202:164</div>
<div class="r" style="left:420.00px;top:745.30px;width:402.80px;height:126.40px;background:#fff;border:1px solid #e5e5e5;box-sizing:border-box;box-shadow:0 1px 1px rgba(0,0,0,0.07);"></div>
<div class="t" style="left:428.30px;top:755.00px;font-size:8.6px;color:#171717;-webkit-text-stroke:0.35px #171717;">Inbound Discard %</div>
<div class="r" style="left:509.16px;top:753.30px;width:16.30px;height:10.10px;border:1px solid #e2e2e2;border-bottom-color:#d8d8d8;border-radius:2.5px;box-sizing:border-box;background:#fff;"></div>
<div class="t" style="left:512.87px;top:756.00px;font-size:6.4px;color:#5c5c5c;">5m</div>
<svg class="r" style="left:791.30px;top:753.60px" width="8" height="9" viewBox="0 0 8 9"><path d="M1.3 6.5 L1.8 5.9 L1.8 3.7 C1.8 2.3 2.7 1.4 4 1.4 C5.3 1.4 6.2 2.3 6.2 3.7 L6.2 5.9 L6.7 6.5 Z" fill="none" stroke="#c4c4c4" stroke-width="0.85" stroke-linejoin="round"/><path d="M3.3 7.6 L4.7 7.6" stroke="#c4c4c4" stroke-width="0.7"/></svg>
<svg class="r" style="left:807.20px;top:756.30px" width="10.00" height="4"><circle cx="2.00" cy="2" r="0.8" fill="#b0b0b0"/><circle cx="5.00" cy="2" r="0.8" fill="#b0b0b0"/><circle cx="8.00" cy="2" r="0.8" fill="#b0b0b0"/></svg>
<div class="t" style="left:428.30px;top:768.00px;font-size:7.56px;color:#bdbdbd;-webkit-text-stroke:0.15px #bdbdbd;">total rate (%) of packets discarded - undefined for zero traffic</div>
<div class="r" style="left:456.50px;top:797.20px;width:357.60px;height:1.00px;background:#ebebeb;"></div>
<div class="r" style="left:456.50px;top:823.80px;width:357.60px;height:1.00px;background:#ebebeb;"></div>
<div class="r" style="left:456.50px;top:847.15px;width:357.60px;height:1.10px;background:#6e6e6e;"></div>
<div class="t" style="left:436.03px;top:795.00px;font-size:7.3px;color:#7c7c7c;">0.010</div>
<div class="t" style="left:436.03px;top:821.00px;font-size:7.3px;color:#7c7c7c;">0.005</div>
<div class="t" style="left:519.04px;top:856.00px;font-size:7.3px;color:#7c7c7c;letter-spacing:0.126px;">04:30</div>
<div class="t" style="left:596.23px;top:856.00px;font-size:7.3px;color:#7c7c7c;letter-spacing:0.126px;">05:00</div>
<div class="t" style="left:673.41px;top:856.00px;font-size:7.3px;color:#7c7c7c;letter-spacing:0.126px;">05:30</div>
<div class="t" style="left:750.60px;top:856.00px;font-size:7.3px;color:#7c7c7c;letter-spacing:0.126px;">06:00</div>
<svg class="r" style="left:456.50px;top:745.30px;overflow:hidden" width="357.60" height="126.40" viewBox="456.50 745.30 357.60 126.40"><polyline points="456.50,838.16 464.18,841.85 477.04,835.36 489.90,841.85 502.77,835.36 515.63,841.85 528.50,835.59 541.36,842.63 554.22,837.60 567.09,832.57 579.95,835.36 592.82,842.63 605.68,832.57 618.54,835.92 631.41,835.92 644.27,835.92 657.14,837.04 670.00,840.39 682.86,832.90 695.73,842.29 708.59,836.26 721.46,836.26 734.32,836.26 747.18,842.29 760.05,836.26 772.91,842.29 785.78,838.94 798.64,843.41 811.50,836.48 814.10,837.37" fill="none" stroke="#6ea4c0" stroke-width="1.0" stroke-linejoin="round"/><polyline points="456.50,788.19 464.18,788.19 477.04,788.19 489.90,825.30 502.77,825.30 515.63,825.30 528.50,825.30 541.36,830.00 554.22,830.00 567.09,825.86 579.95,825.86 592.82,826.20 605.68,826.42 618.54,826.42 631.41,826.42 644.27,790.31 657.14,791.21 670.00,830.33 682.86,830.33 695.73,826.42 708.59,826.42 721.46,826.42 734.32,826.42 747.18,826.98 760.05,826.98 772.91,826.98 785.78,827.54 798.64,831.45 811.50,831.45 814.10,830.67" fill="none" stroke="#c6683a" stroke-width="1.0" stroke-linejoin="round"/></svg>
<div class="r" style="left:420.00px;top:880.20px;width:402.80px;height:126.40px;background:#fff;border:1px solid #e5e5e5;box-sizing:border-box;box-shadow:0 1px 1px rgba(0,0,0,0.07);"></div>
<div class="t" style="left:428.30px;top:890.00px;font-size:8.6px;color:#171717;-webkit-text-stroke:0.35px #171717;">Inbound Unknown Protocol %</div>
<div class="r" style="left:549.80px;top:888.20px;width:16.30px;height:10.10px;border:1px solid #e2e2e2;border-bottom-color:#d8d8d8;border-radius:2.5px;box-sizing:border-box;background:#fff;"></div>
<div class="t" style="left:553.51px;top:891.00px;font-size:6.4px;color:#5c5c5c;">5m</div>
<svg class="r" style="left:791.30px;top:888.50px" width="8" height="9" viewBox="0 0 8 9"><path d="M1.3 6.5 L1.8 5.9 L1.8 3.7 C1.8 2.3 2.7 1.4 4 1.4 C5.3 1.4 6.2 2.3 6.2 3.7 L6.2 5.9 L6.7 6.5 Z" fill="none" stroke="#c4c4c4" stroke-width="0.85" stroke-linejoin="round"/><path d="M3.3 7.6 L4.7 7.6" stroke="#c4c4c4" stroke-width="0.7"/></svg>
<svg class="r" style="left:807.20px;top:891.20px" width="10.00" height="4"><circle cx="2.00" cy="2" r="0.8" fill="#b0b0b0"/><circle cx="5.00" cy="2" r="0.8" fill="#b0b0b0"/><circle cx="8.00" cy="2" r="0.8" fill="#b0b0b0"/></svg>
<div class="t" style="left:428.30px;top:903.00px;font-size:7.56px;color:#bdbdbd;-webkit-text-stroke:0.15px #bdbdbd;">total rate (%) of packets discarded (protocol unknown) - undefined for zero traffic</div>
<div class="r" style="left:456.50px;top:917.90px;width:357.60px;height:1.00px;background:#ebebeb;"></div>
<div class="r" style="left:456.50px;top:936.00px;width:357.60px;height:1.00px;background:#ebebeb;"></div>
<div class="r" style="left:456.50px;top:954.20px;width:357.60px;height:1.00px;background:#ebebeb;"></div>
<div class="r" style="left:456.50px;top:971.90px;width:357.60px;height:1.00px;background:#ebebeb;"></div>
<div class="r" style="left:456.50px;top:981.85px;width:357.60px;height:1.10px;background:#8a8a8a;"></div>
<div class="t" style="left:436.03px;top:919.00px;font-size:7.3px;color:#7c7c7c;">0.800</div>
<div class="t" style="left:436.03px;top:934.00px;font-size:7.3px;color:#7c7c7c;">0.600</div>
<div class="t" style="left:436.03px;top:952.00px;font-size:7.3px;color:#7c7c7c;">0.400</div>
<div class="t" style="left:436.03px;top:969.00px;font-size:7.3px;color:#7c7c7c;">0.200</div>
<div class="t" style="left:519.04px;top:991.00px;font-size:7.3px;color:#7c7c7c;letter-spacing:0.126px;">04:30</div>
<div class="t" style="left:596.23px;top:991.00px;font-size:7.3px;color:#7c7c7c;letter-spacing:0.126px;">05:00</div>
<div class="t" style="left:673.41px;top:991.00px;font-size:7.3px;color:#7c7c7c;letter-spacing:0.126px;">05:30</div>
<div class="t" style="left:750.60px;top:991.00px;font-size:7.3px;color:#7c7c7c;letter-spacing:0.126px;">06:00</div>
<svg class="r" style="left:456.50px;top:880.20px;overflow:hidden" width="357.60" height="126.40" viewBox="456.50 880.20 357.60 126.40"><polyline points="456.50,957.51 464.18,962.54 477.04,935.49 489.90,958.29 502.77,935.49 515.63,969.24 528.50,942.42 541.36,962.31 554.22,942.42 567.09,922.30 579.95,935.15 592.82,971.26 605.68,922.30 618.54,935.49 631.41,935.49 644.27,935.49 657.14,941.86 670.00,958.63 682.86,922.85 695.73,968.69 708.59,931.80 721.46,939.06 734.32,953.82 747.18,962.31 760.05,932.13 772.91,960.53 785.78,949.12 798.64,967.90 811.50,935.49 814.10,939.29" fill="none" stroke="#6ea4c0" stroke-width="1.0" stroke-linejoin="round"/><polyline points="456.50,960.53 464.18,960.53 477.04,960.53 489.90,978.41 502.77,978.41 515.63,978.41 528.50,978.41 541.36,975.06 554.22,975.06 567.09,978.41 579.95,978.41 592.82,978.41 605.68,978.41 618.54,978.41 631.41,978.41 644.27,960.53 657.14,960.53 670.00,975.39 682.86,975.39 695.73,978.41 708.59,978.41 721.46,978.41 734.32,978.41 747.18,978.41 760.05,978.41 772.91,978.41 785.78,977.29 798.64,975.39 811.50,975.39 814.10,975.95" fill="none" stroke="#c6683a" stroke-width="1.0" stroke-linejoin="round"/></svg>
<div class="r" style="left:1241.00px;top:341.10px;width:403.80px;height:126.40px;background:#fff;border:1px solid #e5e5e5;box-sizing:border-box;box-shadow:0 1px 1px rgba(0,0,0,0.07);"></div>
<div class="t" style="left:1249.30px;top:351.00px;font-size:8.6px;color:#171717;-webkit-text-stroke:0.35px #171717;">Outbound Unicast Packet Rate</div>
<div class="r" style="left:1375.58px;top:349.10px;width:16.30px;height:10.10px;border:1px solid #e2e2e2;border-bottom-color:#d8d8d8;border-radius:2.5px;box-sizing:border-box;background:#fff;"></div>
<div class="t" style="left:1379.28px;top:352.00px;font-size:6.4px;color:#5c5c5c;">5m</div>
<svg class="r" style="left:1613.30px;top:349.40px" width="8" height="9" viewBox="0 0 8 9"><path d="M1.3 6.5 L1.8 5.9 L1.8 3.7 C1.8 2.3 2.7 1.4 4 1.4 C5.3 1.4 6.2 2.3 6.2 3.7 L6.2 5.9 L6.7 6.5 Z" fill="none" stroke="#c4c4c4" stroke-width="0.85" stroke-linejoin="round"/><path d="M3.3 7.6 L4.7 7.6" stroke="#c4c4c4" stroke-width="0.7"/></svg>
<svg class="r" style="left:1629.20px;top:352.10px" width="10.00" height="4"><circle cx="2.00" cy="2" r="0.8" fill="#b0b0b0"/><circle cx="5.00" cy="2" r="0.8" fill="#b0b0b0"/><circle cx="8.00" cy="2" r="0.8" fill="#b0b0b0"/></svg>
<div class="t" style="left:1249.30px;top:364.00px;font-size:7.56px;color:#bdbdbd;-webkit-text-stroke:0.15px #bdbdbd;">Packets/second count total for device</div>
<div class="r" style="left:1277.90px;top:397.90px;width:357.60px;height:1.00px;background:#ebebeb;"></div>
<div class="r" style="left:1277.90px;top:426.65px;width:357.60px;height:1.60px;background:#c8c8c8;"></div>
<div class="t" style="left:1259.87px;top:396.00px;font-size:7.3px;color:#7c7c7c;">200k</div>
<div class="t" style="left:1271.64px;top:422.00px;font-size:7.3px;color:#7c7c7c;">0</div>
<div class="t" style="left:1340.44px;top:436.00px;font-size:7.3px;color:#7c7c7c;letter-spacing:0.126px;">04:30</div>
<div class="t" style="left:1417.63px;top:436.00px;font-size:7.3px;color:#7c7c7c;letter-spacing:0.126px;">05:00</div>
<div class="t" style="left:1494.81px;top:436.00px;font-size:7.3px;color:#7c7c7c;letter-spacing:0.126px;">05:30</div>
<div class="t" style="left:1572.00px;top:436.00px;font-size:7.3px;color:#7c7c7c;letter-spacing:0.126px;">06:00</div>
<svg class="r" style="left:1277.90px;top:341.10px;overflow:hidden" width="357.60" height="126.40" viewBox="1277.90 341.10 357.60 126.40"><polyline points="1277.90,421.30 1285.58,420.41 1298.44,420.41 1311.30,420.41 1324.17,420.41 1337.03,420.41 1349.90,420.41 1362.76,420.18 1375.62,422.42 1388.49,420.18 1401.35,421.30 1414.22,420.41 1427.08,420.41 1439.94,420.41 1452.81,420.41 1465.67,420.41 1478.54,383.30 1491.40,420.18 1504.26,420.41 1517.13,420.41 1529.99,420.41 1542.86,422.20 1555.72,420.74 1568.58,420.41 1581.45,420.41 1594.31,421.86 1607.18,383.52 1620.04,419.96 1632.90,420.41 1635.50,420.41" fill="none" stroke="#6ea4c0" stroke-width="1.0" stroke-linejoin="round"/><polyline points="1277.90,423.76 1285.58,423.76 1298.44,423.76 1311.30,423.76 1324.17,423.76 1337.03,423.76 1349.90,423.76 1362.76,423.09 1375.62,422.98 1388.49,423.76 1401.35,423.76 1414.22,423.76 1427.08,423.76 1439.94,423.76 1452.81,423.76 1465.67,423.76 1478.54,423.54 1491.40,423.09 1504.26,423.09 1517.13,423.54 1529.99,423.54 1542.86,423.54 1555.72,423.54 1568.58,423.54 1581.45,423.31 1594.31,423.31 1607.18,417.39 1620.04,423.31 1632.90,423.31 1635.50,423.31" fill="none" stroke="#c6683a" stroke-width="1.0" stroke-linejoin="round"/></svg>
<svg class="r" style="left:1265.90px;top:452.80px" width="10" height="4"><rect x="0" y="1.25" width="9.4" height="1.5" fill="#c6683a"/></svg>
<div class="t" style="left:1280.50px;top:450.00px;font-size:8.6px;color:#2e2e2e;letter-spacing:-0.001px;-webkit-text-stroke:0.22px #2e2e2e;">10.202.6.202</div>
<svg class="r" style="left:1349.10px;top:452.80px" width="10" height="4"><rect x="0" y="1.25" width="9.8" height="1.5" fill="#6ea4c0"/></svg>
<div class="t" style="left:1363.70px;top:450.00px;font-size:8.6px;color:#2e2e2e;letter-spacing:0.034px;-webkit-text-stroke:0.22px #2e2e2e;">10.202.6.202:164</div>
<div class="r" style="left:1241.00px;top:475.90px;width:403.80px;height:126.40px;background:#fff;border:1px solid #e5e5e5;box-sizing:border-box;box-shadow:0 1px 1px rgba(0,0,0,0.07);"></div>
<div class="t" style="left:1249.30px;top:486.00px;font-size:8.6px;color:#171717;-webkit-text-stroke:0.35px #171717;">Outbound Non-Unicast Packet Rate</div>
<div class="r" style="left:1394.22px;top:483.90px;width:16.30px;height:10.10px;border:1px solid #e2e2e2;border-bottom-color:#d8d8d8;border-radius:2.5px;box-sizing:border-box;background:#fff;"></div>
<div class="t" style="left:1397.92px;top:487.00px;font-size:6.4px;color:#5c5c5c;">5m</div>
<svg class="r" style="left:1613.30px;top:484.20px" width="8" height="9" viewBox="0 0 8 9"><path d="M1.3 6.5 L1.8 5.9 L1.8 3.7 C1.8 2.3 2.7 1.4 4 1.4 C5.3 1.4 6.2 2.3 6.2 3.7 L6.2 5.9 L6.7 6.5 Z" fill="none" stroke="#c4c4c4" stroke-width="0.85" stroke-linejoin="round"/><path d="M3.3 7.6 L4.7 7.6" stroke="#c4c4c4" stroke-width="0.7"/></svg>
<svg class="r" style="left:1629.20px;top:486.90px" width="10.00" height="4"><circle cx="2.00" cy="2" r="0.8" fill="#b0b0b0"/><circle cx="5.00" cy="2" r="0.8" fill="#b0b0b0"/><circle cx="8.00" cy="2" r="0.8" fill="#b0b0b0"/></svg>
<div class="t" style="left:1249.30px;top:499.00px;font-size:7.56px;color:#bdbdbd;-webkit-text-stroke:0.15px #bdbdbd;">Packets/second count total for device (mulitcast / broadcast)</div>
<div class="r" style="left:1277.90px;top:516.90px;width:357.60px;height:1.00px;background:#ebebeb;"></div>
<div class="r" style="left:1277.90px;top:561.65px;width:357.60px;height:1.60px;background:#c8c8c8;"></div>
<div class="t" style="left:1263.93px;top:515.00px;font-size:7.3px;color:#7c7c7c;">50k</div>
<div class="t" style="left:1271.64px;top:557.00px;font-size:7.3px;color:#7c7c7c;">0</div>
<div class="t" style="left:1340.44px;top:571.00px;font-size:7.3px;color:#7c7c7c;letter-spacing:0.126px;">04:30</div>
<div class="t" style="left:1417.63px;top:571.00px;font-size:7.3px;color:#7c7c7c;letter-spacing:0.126px;">05:00</div>
<div class="t" style="left:1494.81px;top:571.00px;font-size:7.3px;color:#7c7c7c;letter-spacing:0.126px;">05:30</div>
<div class="t" style="left:1572.00px;top:571.00px;font-size:7.3px;color:#7c7c7c;letter-spacing:0.126px;">06:00</div>
<svg class="r" style="left:1277.90px;top:475.90px;overflow:hidden" width="357.60" height="126.40" viewBox="1277.90 475.90 357.60 126.40"><polyline points="1277.90,555.74 1285.58,555.52 1298.44,555.18 1311.30,556.08 1324.17,555.41 1337.03,555.41 1349.90,555.41 1362.76,554.96 1375.62,556.86 1388.49,555.41 1401.35,557.20 1414.22,555.41 1427.08,555.41 1439.94,555.41 1452.81,555.41 1465.67,555.41 1478.54,519.97 1491.40,554.96 1504.26,555.18 1517.13,554.96 1529.99,555.41 1542.86,555.74 1555.72,555.41 1568.58,555.41 1581.45,555.41 1594.31,555.41 1607.18,518.07 1620.04,554.74 1632.90,555.18 1635.50,555.18" fill="none" stroke="#6ea4c0" stroke-width="1.0" stroke-linejoin="round"/><polyline points="1277.90,558.54 1285.58,558.54 1298.44,558.54 1311.30,558.54 1324.17,558.54 1337.03,558.54 1349.90,558.54 1362.76,557.64 1375.62,557.42 1388.49,558.54 1401.35,558.54 1414.22,558.54 1427.08,558.54 1439.94,558.54 1452.81,558.54 1465.67,558.54 1478.54,558.54 1491.40,557.64 1504.26,557.64 1517.13,558.54 1529.99,558.54 1542.86,558.54 1555.72,558.54 1568.58,558.54 1581.45,558.54 1594.31,558.54 1607.18,552.72 1620.04,557.64 1632.90,557.64 1635.50,557.98" fill="none" stroke="#c6683a" stroke-width="1.0" stroke-linejoin="round"/></svg>
<svg class="r" style="left:1265.90px;top:587.60px" width="10" height="4"><rect x="0" y="1.25" width="9.4" height="1.5" fill="#c6683a"/></svg>
<div class="t" style="left:1280.50px;top:585.00px;font-size:8.6px;color:#2e2e2e;letter-spacing:-0.001px;-webkit-text-stroke:0.22px #2e2e2e;">10.202.6.202</div>
<svg class="r" style="left:1349.10px;top:587.60px" width="10" height="4"><rect x="0" y="1.25" width="9.8" height="1.5" fill="#6ea4c0"/></svg>
<div class="t" style="left:1363.70px;top:585.00px;font-size:8.6px;color:#2e2e2e;letter-spacing:0.034px;-webkit-text-stroke:0.22px #2e2e2e;">10.202.6.202:164</div>
<div class="r" style="left:1241.00px;top:610.30px;width:403.80px;height:126.40px;background:#fff;border:1px solid #e5e5e5;box-sizing:border-box;box-shadow:0 1px 1px rgba(0,0,0,0.07);"></div>
<div class="t" style="left:1249.30px;top:620.00px;font-size:8.6px;color:#171717;-webkit-text-stroke:0.35px #171717;">Outbound Error %</div>
<div class="r" style="left:1326.81px;top:618.30px;width:16.30px;height:10.10px;border:1px solid #e2e2e2;border-bottom-color:#d8d8d8;border-radius:2.5px;box-sizing:border-box;background:#fff;"></div>
<div class="t" style="left:1330.52px;top:621.00px;font-size:6.4px;color:#5c5c5c;">5m</div>
<svg class="r" style="left:1613.30px;top:618.60px" width="8" height="9" viewBox="0 0 8 9"><path d="M1.3 6.5 L1.8 5.9 L1.8 3.7 C1.8 2.3 2.7 1.4 4 1.4 C5.3 1.4 6.2 2.3 6.2 3.7 L6.2 5.9 L6.7 6.5 Z" fill="none" stroke="#c4c4c4" stroke-width="0.85" stroke-linejoin="round"/><path d="M3.3 7.6 L4.7 7.6" stroke="#c4c4c4" stroke-width="0.7"/></svg>
<svg class="r" style="left:1629.20px;top:621.30px" width="10.00" height="4"><circle cx="2.00" cy="2" r="0.8" fill="#b0b0b0"/><circle cx="5.00" cy="2" r="0.8" fill="#b0b0b0"/><circle cx="8.00" cy="2" r="0.8" fill="#b0b0b0"/></svg>
<div class="t" style="left:1249.30px;top:633.00px;font-size:7.56px;color:#bdbdbd;-webkit-text-stroke:0.15px #bdbdbd;">Error rate (%) total for device - undefined for zero traffic</div>
<div class="r" style="left:1277.90px;top:656.30px;width:357.60px;height:1.00px;background:#ebebeb;"></div>
<div class="r" style="left:1277.90px;top:677.30px;width:357.60px;height:1.00px;background:#ebebeb;"></div>
<div class="r" style="left:1277.90px;top:697.05px;width:357.60px;height:1.10px;background:#6e6e6e;"></div>
<div class="t" style="left:1257.43px;top:654.00px;font-size:7.3px;color:#7c7c7c;">0.040</div>
<div class="t" style="left:1257.43px;top:675.00px;font-size:7.3px;color:#7c7c7c;">0.020</div>
<div class="t" style="left:1340.44px;top:705.00px;font-size:7.3px;color:#7c7c7c;letter-spacing:0.126px;">04:30</div>
<div class="t" style="left:1417.63px;top:705.00px;font-size:7.3px;color:#7c7c7c;letter-spacing:0.126px;">05:00</div>
<div class="t" style="left:1494.81px;top:705.00px;font-size:7.3px;color:#7c7c7c;letter-spacing:0.126px;">05:30</div>
<div class="t" style="left:1572.00px;top:705.00px;font-size:7.3px;color:#7c7c7c;letter-spacing:0.126px;">06:00</div>
<svg class="r" style="left:1277.90px;top:610.30px;overflow:hidden" width="357.60" height="126.40" viewBox="1277.90 610.30 357.60 126.40"><polyline points="1277.90,691.42 1285.58,691.98 1298.44,692.31 1311.30,691.64 1324.17,691.64 1337.03,691.98 1349.90,691.98 1362.76,693.10 1375.62,688.29 1388.49,692.31 1401.35,691.20 1414.22,691.42 1427.08,692.31 1439.94,692.31 1452.81,692.31 1465.67,691.98 1478.54,691.98 1491.40,693.43 1504.26,691.98 1517.13,691.98 1529.99,691.98 1542.86,689.74 1555.72,691.42 1568.58,692.31 1581.45,691.98 1594.31,690.08 1607.18,691.64 1620.04,693.43 1632.90,692.31 1635.50,692.31" fill="none" stroke="#6ea4c0" stroke-width="1.0" stroke-linejoin="round"/><polyline points="1277.90,653.19 1285.58,653.19 1298.44,653.19 1311.30,653.19 1324.17,653.41 1337.03,653.41 1349.90,653.64 1362.76,668.50 1375.62,668.50 1388.49,653.64 1401.35,653.64 1414.22,653.64 1427.08,654.08 1439.94,654.53 1452.81,654.31 1465.67,654.31 1478.54,654.53 1491.40,669.62 1504.26,669.62 1517.13,655.43 1529.99,655.65 1542.86,655.65 1555.72,655.65 1568.58,656.21 1581.45,656.21 1594.31,656.21 1607.18,659.23 1620.04,670.18 1632.90,670.18 1635.50,668.84" fill="none" stroke="#c6683a" stroke-width="1.0" stroke-linejoin="round"/></svg>
<svg class="r" style="left:1265.90px;top:722.00px" width="10" height="4"><rect x="0" y="1.25" width="9.4" height="1.5" fill="#c6683a"/></svg>
<div class="t" style="left:1280.50px;top:720.00px;font-size:8.6px;color:#2e2e2e;letter-spacing:-0.001px;-webkit-text-stroke:0.22px #2e2e2e;">10.202.6.202</div>
<svg class="r" style="left:1349.10px;top:722.00px" width="10" height="4"><rect x="0" y="1.25" width="9.8" height="1.5" fill="#6ea4c0"/></svg>
<div class="t" style="left:1363.70px;top:720.00px;font-size:8.6px;color:#2e2e2e;letter-spacing:0.034px;-webkit-text-stroke:0.22px #2e2e2e;">10.202.6.202:164</div>
<div class="r" style="left:1241.00px;top:745.30px;width:403.80px;height:126.40px;background:#fff;border:1px solid #e5e5e5;box-sizing:border-box;box-shadow:0 1px 1px rgba(0,0,0,0.07);"></div>
<div class="t" style="left:1249.30px;top:755.00px;font-size:8.6px;color:#171717;-webkit-text-stroke:0.35px #171717;">Outbound Discard %</div>
<div class="r" style="left:1336.85px;top:753.30px;width:16.30px;height:10.10px;border:1px solid #e2e2e2;border-bottom-color:#d8d8d8;border-radius:2.5px;box-sizing:border-box;background:#fff;"></div>
<div class="t" style="left:1340.56px;top:756.00px;font-size:6.4px;color:#5c5c5c;">5m</div>
<svg class="r" style="left:1613.30px;top:753.60px" width="8" height="9" viewBox="0 0 8 9"><path d="M1.3 6.5 L1.8 5.9 L1.8 3.7 C1.8 2.3 2.7 1.4 4 1.4 C5.3 1.4 6.2 2.3 6.2 3.7 L6.2 5.9 L6.7 6.5 Z" fill="none" stroke="#c4c4c4" stroke-width="0.85" stroke-linejoin="round"/><path d="M3.3 7.6 L4.7 7.6" stroke="#c4c4c4" stroke-width="0.7"/></svg>
<svg class="r" style="left:1629.20px;top:756.30px" width="10.00" height="4"><circle cx="2.00" cy="2" r="0.8" fill="#b0b0b0"/><circle cx="5.00" cy="2" r="0.8" fill="#b0b0b0"/><circle cx="8.00" cy="2" r="0.8" fill="#b0b0b0"/></svg>
<div class="t" style="left:1249.30px;top:768.00px;font-size:7.56px;color:#bdbdbd;-webkit-text-stroke:0.15px #bdbdbd;">total rate (%) of packets discarded - undefined for zero traffic</div>
<div class="r" style="left:1277.90px;top:792.90px;width:357.60px;height:1.00px;background:#ebebeb;"></div>
<div class="r" style="left:1277.90px;top:807.10px;width:357.60px;height:1.00px;background:#ebebeb;"></div>
<div class="r" style="left:1277.90px;top:821.50px;width:357.60px;height:1.00px;background:#ebebeb;"></div>
<div class="r" style="left:1277.90px;top:835.80px;width:357.60px;height:1.00px;background:#ebebeb;"></div>
<div class="r" style="left:1277.90px;top:847.15px;width:357.60px;height:1.10px;background:#6e6e6e;"></div>
<div class="t" style="left:1257.43px;top:791.00px;font-size:7.3px;color:#7c7c7c;">0.040</div>
<div class="t" style="left:1257.43px;top:805.00px;font-size:7.3px;color:#7c7c7c;">0.030</div>
<div class="t" style="left:1257.43px;top:819.00px;font-size:7.3px;color:#7c7c7c;">0.020</div>
<div class="t" style="left:1257.43px;top:833.00px;font-size:7.3px;color:#7c7c7c;">0.010</div>
<div class="t" style="left:1340.44px;top:856.00px;font-size:7.3px;color:#7c7c7c;letter-spacing:0.126px;">04:30</div>
<div class="t" style="left:1417.63px;top:856.00px;font-size:7.3px;color:#7c7c7c;letter-spacing:0.126px;">05:00</div>
<div class="t" style="left:1494.81px;top:856.00px;font-size:7.3px;color:#7c7c7c;letter-spacing:0.126px;">05:30</div>
<div class="t" style="left:1572.00px;top:856.00px;font-size:7.3px;color:#7c7c7c;letter-spacing:0.126px;">06:00</div>
<svg class="r" style="left:1277.90px;top:745.30px;overflow:hidden" width="357.60" height="126.40" viewBox="1277.90 745.30 357.60 126.40"><polyline points="1277.90,841.17 1285.58,842.07 1298.44,842.07 1311.30,841.85 1324.17,842.07 1337.03,842.07 1349.90,842.07 1362.76,843.19 1375.62,837.04 1388.49,842.63 1401.35,840.95 1414.22,842.07 1427.08,842.07 1439.94,842.29 1452.81,842.29 1465.67,842.07 1478.54,841.85 1491.40,843.19 1504.26,842.29 1517.13,842.29 1529.99,842.07 1542.86,838.72 1555.72,841.85 1568.58,842.29 1581.45,842.29 1594.31,838.94 1607.18,841.85 1620.04,843.41 1632.90,842.29 1635.50,842.29" fill="none" stroke="#6ea4c0" stroke-width="1.0" stroke-linejoin="round"/><polyline points="1277.90,787.85 1285.58,788.19 1298.44,788.19 1311.30,788.19 1324.17,788.41 1337.03,788.64 1349.90,788.97 1362.76,809.65 1375.62,809.65 1388.49,789.31 1401.35,789.31 1414.22,789.31 1427.08,790.09 1439.94,790.43 1452.81,790.43 1465.67,790.43 1478.54,790.65 1491.40,810.99 1504.26,811.33 1517.13,791.54 1529.99,791.99 1542.86,791.99 1555.72,791.99 1568.58,792.33 1581.45,792.33 1594.31,792.66 1607.18,797.13 1620.04,812.45 1632.90,812.45 1635.50,809.43" fill="none" stroke="#c6683a" stroke-width="1.0" stroke-linejoin="round"/></svg>
<div class="r" style="left:830.20px;top:880.20px;width:814.60px;height:126.40px;background:#fff;border:1px solid #e5e5e5;box-sizing:border-box;box-shadow:0 1px 1px rgba(0,0,0,0.07);"></div>
<div class="t" style="left:838.80px;top:889.00px;font-size:8.6px;color:#171717;letter-spacing:-0.004px;-webkit-text-stroke:0.35px #171717;">Outbound Queue Length</div>
<div class="r" style="left:942.20px;top:888.20px;width:15.40px;height:9.50px;border:1px solid #e2e2e2;border-bottom-color:#d8d8d8;border-radius:2.5px;box-sizing:border-box;background:#fff;"></div>
<div class="t" style="left:945.45px;top:891.00px;font-size:6.4px;color:#5c5c5c;">5m</div>
<svg class="r" style="left:1612.00px;top:888.10px" width="8" height="9" viewBox="0 0 8 9"><path d="M1.3 6.5 L1.8 5.9 L1.8 3.7 C1.8 2.3 2.7 1.4 4 1.4 C5.3 1.4 6.2 2.3 6.2 3.7 L6.2 5.9 L6.7 6.5 Z" fill="none" stroke="#c4c4c4" stroke-width="0.85" stroke-linejoin="round"/><path d="M3.3 7.6 L4.7 7.6" stroke="#c4c4c4" stroke-width="0.7"/></svg>
<svg class="r" style="left:1628.00px;top:890.90px" width="10.00" height="4"><circle cx="2.00" cy="2" r="0.8" fill="#b0b0b0"/><circle cx="5.00" cy="2" r="0.8" fill="#b0b0b0"/><circle cx="8.00" cy="2" r="0.8" fill="#b0b0b0"/></svg>
<div class="t" style="left:838.80px;top:903.00px;font-size:7.6px;color:#bdbdbd;letter-spacing:-0.077px;-webkit-text-stroke:0.15px #bdbdbd;">Packet Queue Depth (outbound)</div>
<div class="r" style="left:867.50px;top:922.00px;width:768.30px;height:1.00px;background:#ebebeb;"></div>
<div class="r" style="left:867.50px;top:949.90px;width:768.30px;height:1.00px;background:#ebebeb;"></div>
<div class="r" style="left:867.50px;top:977.80px;width:768.30px;height:1.20px;background:#6ea4c0;"></div>
<div class="r" style="left:867.50px;top:981.80px;width:768.30px;height:1.20px;background:#9a9a9a;"></div>
<div class="t" style="left:860.64px;top:920.00px;font-size:7.3px;color:#7c7c7c;">1</div>
<div class="t" style="left:846.43px;top:947.00px;font-size:7.3px;color:#7c7c7c;">0.500</div>
<div class="t" style="left:860.64px;top:975.00px;font-size:7.3px;color:#7c7c7c;">0</div>
<div class="t" style="left:901.85px;top:991.00px;font-size:7.3px;color:#7c7c7c;letter-spacing:0.126px;">04:10</div>
<div class="t" style="left:957.13px;top:991.00px;font-size:7.3px;color:#7c7c7c;letter-spacing:0.126px;">04:20</div>
<div class="t" style="left:1012.41px;top:991.00px;font-size:7.3px;color:#7c7c7c;letter-spacing:0.126px;">04:30</div>
<div class="t" style="left:1067.69px;top:991.00px;font-size:7.3px;color:#7c7c7c;letter-spacing:0.126px;">04:40</div>
<div class="t" style="left:1122.97px;top:991.00px;font-size:7.3px;color:#7c7c7c;letter-spacing:0.126px;">04:50</div>
<div class="t" style="left:1178.25px;top:991.00px;font-size:7.3px;color:#7c7c7c;letter-spacing:0.126px;">05:00</div>
<div class="t" style="left:1233.53px;top:991.00px;font-size:7.3px;color:#7c7c7c;letter-spacing:0.126px;">05:10</div>
<div class="t" style="left:1288.81px;top:991.00px;font-size:7.3px;color:#7c7c7c;letter-spacing:0.126px;">05:20</div>
<div class="t" style="left:1344.09px;top:991.00px;font-size:7.3px;color:#7c7c7c;letter-spacing:0.126px;">05:30</div>
<div class="t" style="left:1399.37px;top:991.00px;font-size:7.3px;color:#7c7c7c;letter-spacing:0.126px;">05:40</div>
<div class="t" style="left:1454.65px;top:991.00px;font-size:7.3px;color:#7c7c7c;letter-spacing:0.126px;">05:50</div>
<div class="t" style="left:1509.93px;top:991.00px;font-size:7.3px;color:#7c7c7c;letter-spacing:0.126px;">06:00</div>
<div class="t" style="left:1565.21px;top:991.00px;font-size:7.3px;color:#7c7c7c;letter-spacing:0.126px;">06:10</div>
<div class="t" style="left:1616.90px;top:991.00px;font-size:7.3px;color:#7c7c7c;letter-spacing:0.126px;">06:20</div></div></body></html>
